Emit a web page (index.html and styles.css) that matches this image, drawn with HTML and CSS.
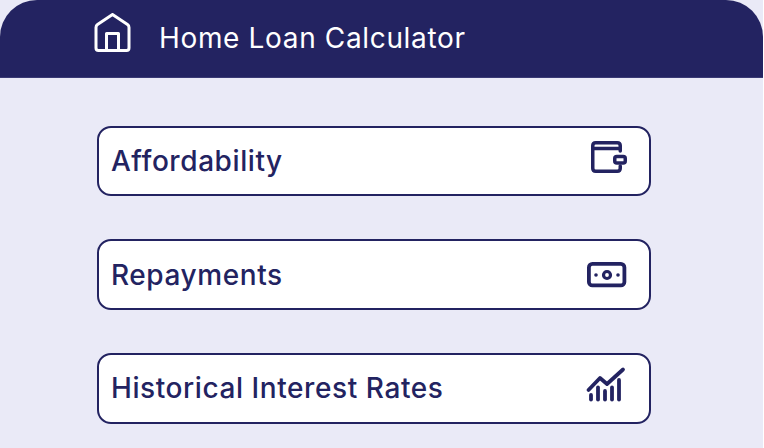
FILE: index.html
```html
<!DOCTYPE html>
<html>
<head>
  <title>Home Loan Calculator</title>
  <link rel="stylesheet" href="styles.css">
</head>
<body>
  <div class="panel">
    <div class="header">
      <svg class="home-icon" width="40" height="40" viewBox="0 0 40 40" fill="none" stroke="#fff" stroke-width="3" stroke-linejoin="round">
        <path d="M18.500 1.500 L33.500 11.500 Q35 12.500 35 14.500 V35 Q35 37.500 32.500 37.500 H4.500 Q2 37.500 2 35 V14.500 Q2 12.500 3.500 11.500 Z"/>
        <path d="M12.500 37 V20.500 H24.500 V37"/>
      </svg>
      <span class="title">Home Loan Calculator</span>
    </div>
    <div class="menu">
      <div class="menu-item">
        <span>Affordability</span>
        <svg class="item-icon" width="40" height="40" viewBox="0 0 40 40" fill="none" stroke="#232361" stroke-width="3.500" stroke-linejoin="round" stroke-linecap="round">
          <path d="M33.250 10 V4.750 Q33.250 1.750 30.250 1.750 H8.750 Q5.750 1.750 5.750 4.750 V27.250 Q5.750 30.250 8.750 30.250 H30.250 Q33.250 30.250 33.250 27.250 V25"/>
          <path d="M5.750 7.500 H33"/>
          <rect x="27.750" y="15.500" width="10.500" height="6.500" rx="2"/>
        </svg>
      </div>
      <div class="menu-item">
        <span>Repayments</span>
        <svg class="item-icon" width="40" height="40" viewBox="0 0 40 40" fill="none" stroke="#232361" stroke-width="3.800">
          <rect x="1.900" y="8.900" width="35.500" height="21.500" rx="3.500"/>
          <circle cx="20" cy="20" r="3.500" stroke-width="3.200"/>
          <circle cx="9" cy="20" r="1.800" fill="#232361" stroke="none"/>
          <circle cx="31" cy="20" r="1.800" fill="#232361" stroke="none"/>
        </svg>
      </div>
      <div class="menu-item">
        <span>Historical Interest Rates</span>
        <svg class="item-icon" width="40" height="40" viewBox="0 0 40 40" fill="none" stroke="#232361" stroke-width="3.800" stroke-linecap="round" stroke-linejoin="round">
          <path d="M1.500 22 L13 10 L20 16 L36 1.500"/>
          <path d="M4 31.500 V27"/>
          <path d="M11 31.500 V19.500"/>
          <path d="M18 31.500 V23"/>
          <path d="M25 31.500 V19.500"/>
          <path d="M32 31.500 V12"/>
        </svg>
      </div>
    </div>
  </div>
</body>
</html>
```

FILE: styles.css
```css
body {
  margin: 0;
  background-color: #fff;
  font-family: Inter, "Liberation Sans", sans-serif;
  overflow: hidden;
}

.panel {
  width: 763px;
  height: 448px;
  background-color: #eaeaf7;
}

.header {
  display: flex;
  align-items: center;
  height: 78px;
  padding-left: 94px;
  padding-bottom: 2px;
  box-sizing: border-box;
  background-color: #232361;
  border-radius: 37px 37px 0 0;
  border-bottom: 1px solid #3a3a75;
}

.home-icon {
  margin-right: 25px;
  margin-bottom: 9px;
}

.title {
  color: #fff;
  font-size: 28px;
  letter-spacing: 0.65px;
}

.menu {
  display: flex;
  flex-direction: column;
  gap: 43.3px;
  padding: 47.5px 0 0 97px;
}

.menu-item {
  display: flex;
  align-items: center;
  justify-content: space-between;
  width: 554px;
  height: 70.5px;
  box-sizing: border-box;
  padding: 0 22px 0 12px;
  background-color: #fff;
  border: 2px solid #232361;
  border-radius: 14px;
  color: #232361;
  font-size: 28px;
  font-weight: 450;
  letter-spacing: 0.58px;
}

.item-icon {
  overflow: visible;
}
```
